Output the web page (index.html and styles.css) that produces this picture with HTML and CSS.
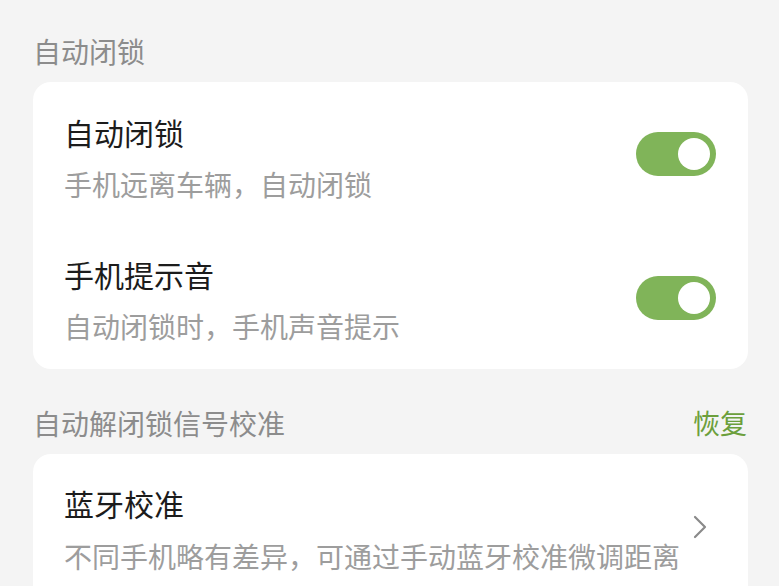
FILE: index.html
```html
<!DOCTYPE html>
<html lang="zh-CN">
<head>
<meta charset="utf-8">
<link rel="stylesheet" href="styles.css">
</head>
<body>
<div class="page">
  <div class="section-header"><span>自动闭锁</span></div>
  <div class="card card-lock">
    <div class="row">
      <div class="text">
        <div class="title">自动闭锁</div>
        <div class="sub">手机远离车辆，自动闭锁</div>
      </div>
      <div class="toggle"><div class="knob"></div></div>
    </div>
    <div class="row row-second">
      <div class="text">
        <div class="title">手机提示音</div>
        <div class="sub">自动闭锁时，手机声音提示</div>
      </div>
      <div class="toggle"><div class="knob"></div></div>
    </div>
  </div>
  <div class="section-header section-header-2"><span>自动解闭锁信号校准</span><span class="reset">恢复</span></div>
  <div class="card card-cal">
    <div class="row row-link">
      <div class="text">
        <div class="title">蓝牙校准</div>
        <div class="sub">不同手机略有差异，可通过手动蓝牙校准微调距离</div>
      </div>
      <svg class="chevron" width="14" height="24" viewBox="0 0 14 24"><polyline points="2,2 12,12 2,22" fill="none" stroke="#8a8a8a" stroke-width="2.2" stroke-linecap="round" stroke-linejoin="round"/></svg>
    </div>
  </div>
</div>
</body>
</html>
```

FILE: styles.css
```css
html, body {
  margin: 0;
  padding: 0;
  background: #f4f4f4;
  overflow: hidden;
  height: 586px;
}
body {
  font-family: "Noto Sans CJK SC", "Noto Sans", sans-serif;
}
.page {
  padding: 31px 31px 0 33px;
}
.section-header {
  display: flex;
  justify-content: space-between;
  align-items: center;
  height: 40px;
  line-height: 40px;
  font-size: 28px;
  color: #8c8c8c;
  padding: 0 1px 0 0;
  margin-bottom: 11px;
}
.section-header-2 {
  margin-top: 34px;
}
.reset {
  color: #6c9f3c;
  font-size: 27px;
}
.card {
  background: #ffffff;
  border-radius: 18px;
}
.card-lock {
  padding: 30px 32px 23px 31px;
  display: flex;
  flex-direction: column;
  gap: 50px;
}
.card-cal {
  padding: 29px 41px 40px 31px;
}
.row {
  display: flex;
  justify-content: space-between;
  align-items: flex-start;
}
.text {
  display: flex;
  flex-direction: column;
  gap: 12px;
}
.title {
  font-size: 30px;
  line-height: 40px;
  color: #1c1c1c;
}
.sub {
  font-size: 28px;
  line-height: 40px;
  color: #9d9d9d;
}
.row-link .text {
  gap: 13px;
}
.toggle {
  width: 80px;
  height: 44px;
  border-radius: 22px;
  background: #80b459;
  margin-top: 20px;
  display: flex;
  align-items: center;
  justify-content: flex-end;
  padding-right: 6px;
  box-sizing: border-box;
}
.row-second .toggle {
  margin-top: 22px;
}
.knob {
  width: 32px;
  height: 32px;
  border-radius: 50%;
  background: #ffffff;
}
.chevron {
  margin-top: 32px;
}
```
